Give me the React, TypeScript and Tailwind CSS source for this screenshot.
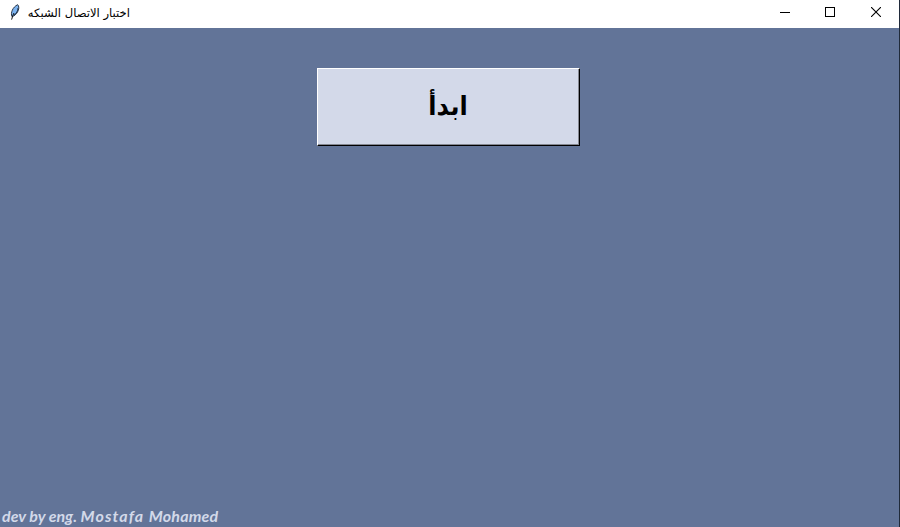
function Feather() {
  return (
    <svg className="block h-[18px] w-3" viewBox="0 0 12 18">
      <path d="M2.9 13.5C1.4 10 3.6 4 8.7 1.7C11.2 4 9.2 10.5 4.6 13Z" fill="#7db4f0" stroke="#182436" strokeWidth="0.9" />
      <path d="M9 5C9.1 7.8 7.2 10.6 4.9 12.2" fill="none" stroke="#22354e" strokeWidth="1" />
      <path d="M5 10L4 12L2.6 16.6" fill="none" stroke="#141414" strokeWidth="1" />
    </svg>
  );
}

function TitleBar() {
  return (
    <header className="flex h-7 shrink-0 items-start bg-white text-black">
      <div className="ml-[9px] mt-[3px] w-3">
        <Feather />
      </div>
      <div dir="rtl" className="ml-[7px] mt-[4px] w-[102px] whitespace-nowrap font-['DejaVu_Sans',sans-serif] text-[11.6px] leading-[18px]">
        اختبار الاتصال الشبكه
      </div>
      <div className="ml-auto flex h-6">
        <button aria-label="Minimize" className="grid w-[46px] place-items-center">
          <svg className="size-[10px]" viewBox="0 0 10 10" shapeRendering="crispEdges"><path d="M0 5.5H10" stroke="#000" /></svg>
        </button>
        <button aria-label="Maximize" className="flex w-[45px] items-center pl-[17px]">
          <svg className="size-[10px]" viewBox="0 0 10 10" shapeRendering="crispEdges"><path d="M.5 .5H9.5V9.5H.5Z" fill="none" stroke="#000" /></svg>
        </button>
        <button aria-label="Close" className="grid w-[46px] place-items-center">
          <svg className="size-[10px]" viewBox="0 0 10 10"><path d="M0 0L10 10M10 0L0 10" stroke="#000" strokeWidth="1.1" /></svg>
        </button>
      </div>
    </header>
  );
}

export default function App() {
  return (
    <div className="flex h-[527px] w-[900px] flex-col overflow-hidden border-r border-[#202a3a] bg-[#627498]">
      <TitleBar />
      <main className="flex flex-1 flex-col items-start justify-between">
        <button className="ml-[317px] mt-10 h-[78px] w-[263px] border border-b-black border-l-white border-r-black border-t-white bg-[#d3d9e9] text-black">
          <span className="flex h-full items-center justify-center border-b border-r border-[#858891] pb-[2px]">
            <span dir="rtl" className="scale-y-[1.1] font-['DejaVu_Sans',sans-serif] text-[24px] font-bold leading-8">ابدأ</span>
          </span>
        </button>
        <p className="mb-px ml-[2px] whitespace-nowrap font-['Lato',sans-serif] text-[16px] font-bold italic leading-[20px] text-[#d3d9e9]">
          dev by eng. <span className="tracking-[1.1px]">Mostafa </span><span className="tracking-[0.15px]">Mohamed</span>
        </p>
      </main>
    </div>
  );
}
